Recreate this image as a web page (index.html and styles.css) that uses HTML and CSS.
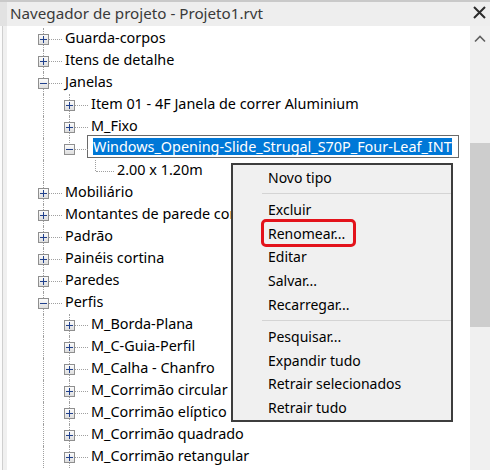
FILE: index.html
```html
<!DOCTYPE html>
<html lang="pt">
<head>
<meta charset="utf-8">
<title>Navegador de projeto</title>
<link rel="stylesheet" href="styles.css">
</head>
<body>
<div class="panel">
  <div class="titlerow">
    <div class="tedge"></div>
    <div class="titlebar">
      <span class="title">Navegador de projeto - Projeto1.rvt</span>
      <svg class="close" width="13" height="13" viewBox="0 0 13 13"><path d="M1 1 L12 12 M12 1 L1 12" stroke="#2b2b2b" stroke-width="2" fill="none"/></svg>
    </div>
  </div>
  <div class="bodyrow">
    <div class="edge"></div>
    <div class="tree">
      <div class="row"><span class="n mid"><i class="box plus"></i></span><span class="lbl">Guarda-corpos</span></div>
      <div class="row"><span class="n mid"><i class="box plus"></i></span><span class="lbl">Itens de detalhe</span></div>
      <div class="row"><span class="n mid"><i class="box"></i></span><span class="lbl">Janelas</span></div>
      <div class="row"><span class="g v"></span><span class="n mid"><i class="box plus"></i></span><span class="lbl">Item 01 - 4F Janela de correr Aluminium</span></div>
      <div class="row"><span class="g v"></span><span class="n mid"><i class="box plus"></i></span><span class="lbl">M_Fixo</span></div>
      <div class="row"><span class="g v"></span><span class="n last"><i class="box"></i></span><span class="edit"><span class="sel">Windows_Opening-Slide_Strugal_S70P_Four-Leaf_INT</span></span></div>
      <div class="row"><span class="g v"></span><span class="g"></span><span class="n last"></span><span class="lbl">2.00 x 1.20m</span></div>
      <div class="row"><span class="n mid"><i class="box plus"></i></span><span class="lbl">Mobiliário</span></div>
      <div class="row"><span class="n mid"><i class="box plus"></i></span><span class="lbl">Montantes de parede cortina</span></div>
      <div class="row"><span class="n mid"><i class="box plus"></i></span><span class="lbl">Padrão</span></div>
      <div class="row"><span class="n mid"><i class="box plus"></i></span><span class="lbl">Painéis cortina</span></div>
      <div class="row"><span class="n mid"><i class="box plus"></i></span><span class="lbl">Paredes</span></div>
      <div class="row"><span class="n mid"><i class="box"></i></span><span class="lbl">Perfis</span></div>
      <div class="row"><span class="g v"></span><span class="n mid"><i class="box plus"></i></span><span class="lbl">M_Borda-Plana</span></div>
      <div class="row"><span class="g v"></span><span class="n mid"><i class="box plus"></i></span><span class="lbl">M_C-Guia-Perfil</span></div>
      <div class="row"><span class="g v"></span><span class="n mid"><i class="box plus"></i></span><span class="lbl">M_Calha - Chanfro</span></div>
      <div class="row"><span class="g v"></span><span class="n mid"><i class="box plus"></i></span><span class="lbl">M_Corrimão circular</span></div>
      <div class="row"><span class="g v"></span><span class="n mid"><i class="box plus"></i></span><span class="lbl">M_Corrimão elíptico</span></div>
      <div class="row"><span class="g v"></span><span class="n mid"><i class="box plus"></i></span><span class="lbl">M_Corrimão quadrado</span></div>
      <div class="row"><span class="g v"></span><span class="n mid"><i class="box plus"></i></span><span class="lbl">M_Corrimão retangular</span></div>
    </div>
    <div class="scrollbar">
      <div class="arrow"><svg width="12" height="8" viewBox="0 0 12 8"><path d="M1 6.5 L6 1.5 L11 6.5" stroke="#606060" stroke-width="1.6" fill="none"/></svg></div>
      <div class="track"><div class="thumb"></div></div>
    </div>
  </div>
  <div class="menu">
    <div class="item">Novo tipo</div>
    <div class="sep"></div>
    <div class="item">Excluir</div>
    <div class="item">Renomear...</div>
    <div class="item">Editar</div>
    <div class="item">Salvar...</div>
    <div class="item">Recarregar...</div>
    <div class="sep"></div>
    <div class="item">Pesquisar...</div>
    <div class="item">Expandir tudo</div>
    <div class="item">Retrair selecionados</div>
    <div class="item">Retrair tudo</div>
  </div>
  <div class="mark"></div>
</div>
</body>
</html>
```

FILE: styles.css
```css
* { box-sizing: border-box; }
html, body { margin: 0; padding: 0; }
body {
  width: 490px;
  height: 470px;
  overflow: hidden;
  background: #ffffff;
  font-family: "Noto Sans", "Open Sans", sans-serif;
  font-size: 14.4px;
  color: #000;
}
.panel {
  position: relative;
  width: 490px;
  height: 470px;
  display: flex;
  flex-direction: column;
  border-top: 2px solid #c9c9c9;
}
.titlerow {
  display: flex;
  height: 24px;
  flex: none;
}
.tedge {
  width: 7px;
  background: #e2e2e2;
}
.titlebar {
  flex: 1;
  display: flex;
  align-items: center;
  justify-content: space-between;
  background: #eeeeee;
  padding: 0 4px 0 3px;
}
.title {
  font-size: 15.2px;
  color: #3a3a3a;
  line-height: 20px;
  padding-bottom: 2px;
}
.close { display: block; margin-bottom: 3px; }
.bodyrow {
  flex: 1;
  display: flex;
  min-height: 0;
}
.edge {
  width: 7px;
  background: #f0f0f0;
  border-left: 2px solid #fbfbfb;
  box-shadow: inset 1px 0 0 #cfcfcf;
}
.tree {
  flex: 1;
  background: #fff;
  padding: 2px 0 0 23px;
  overflow: hidden;
}
.row {
  display: flex;
  height: 22px;
  align-items: flex-start;
  white-space: nowrap;
}
.g, .n {
  position: relative;
  flex: none;
  height: 22px;
}
.g { width: 26px; }
.n { width: 35px; }
.g.v::before, .n::before {
  content: "";
  position: absolute;
  left: 13px;
  top: 0;
  border-left: 1px dotted #a0a0a0;
}
.g.v::before, .n.mid::before { height: 22px; }
.n.last::before { height: 11px; }
.n::after {
  content: "";
  position: absolute;
  left: 14px;
  right: 3px;
  top: 11px;
  border-top: 1px dotted #a0a0a0;
}
.box {
  position: absolute;
  left: 8px;
  top: 6px;
  width: 11px;
  height: 11px;
  border: 1px solid #8f8f8f;
  background: linear-gradient(#fbfbfb, #dedede);
  z-index: 1;
}
.box::before {
  content: "";
  position: absolute;
  left: 1px;
  top: 4px;
  width: 7px;
  height: 1px;
  background: #21418c;
}
.box.plus::after {
  content: "";
  position: absolute;
  left: 4px;
  top: 1px;
  width: 1px;
  height: 7px;
  background: #21418c;
}
.lbl {
  line-height: 18px;
  padding-top: 1px;
}
.edit {
  margin-left: -4px;
  margin-top: -3px;
  height: 23px;
  border: 1px solid #6a6a6a;
  padding: 2px 6px 2px 5px;
  background: #fff;
}
.sel {
  display: block;
  background: #0078d7;
  color: #fff;
  line-height: 17px;
  height: 17px;
}
.scrollbar {
  width: 20px;
  background: #f0f0f0;
  display: flex;
  flex-direction: column;
  align-items: stretch;
}
.arrow {
  height: 17px;
  display: flex;
  justify-content: center;
  align-items: flex-end;
}
.arrow svg { display: block; }
.track {
  flex: 1;
  padding-top: 100px;
}
.thumb {
  height: 184px;
  background: #cdcdcd;
}
.menu {
  position: absolute;
  left: 231px;
  top: 161px;
  width: 222px;
  background: #f0f0f0;
  border: 2px solid #3d3d3d;
  padding-top: 1px;
}
.item {
  height: 23.8px;
  line-height: 23.8px;
  padding-left: 35px;
  font-size: 14px;
  white-space: nowrap;
}
.sep {
  height: 1px;
  margin: 3px 0 4px 29px;
  background: #d4d4d4;
}
.mark {
  position: absolute;
  left: 261px;
  top: 217px;
  width: 95px;
  height: 28px;
  border: 3px solid #e3131b;
  border-radius: 5px;
}
```
